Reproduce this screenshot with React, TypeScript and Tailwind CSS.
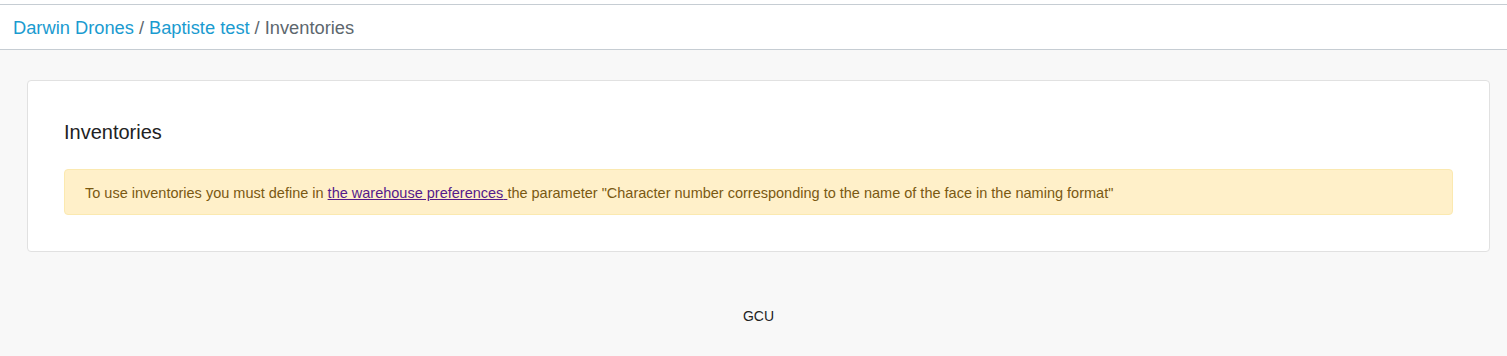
import React from "react";

function Breadcrumb() {
  return (
    <div className="mt-[4px] flex h-[46px] items-center border-y border-[#c6cdd3] bg-white px-[13px] pt-[1px] text-[18.3px]">
      <a href="#" className="text-[#1a9bd0]">
        Darwin Drones
      </a>
      <span className="px-[5px] text-[#5d676e]">/</span>
      <a href="#" className="text-[#1a9bd0]">
        Baptiste test
      </a>
      <span className="px-[5px] text-[#5d676e]">/</span>
      <span className="text-[#5d676e]">Inventories</span>
    </div>
  );
}

export default function App() {
  return (
    <div className="min-h-[356px] bg-[#f8f8f8] font-['Liberation_Sans',Arial,sans-serif]">
      <div className="bg-white">
        <Breadcrumb />
      </div>
      <div className="pl-[27px] pr-[17px] pt-[30px]">
        <div className="rounded-[4px] border border-[#e1e1e1] bg-white pl-[36px] pr-[36px] pb-[36px] pt-[39px]">
          <h1 className="text-[20px] leading-[24px] text-[#222]">Inventories</h1>
          <div className="mt-[25px] flex h-[46px] items-center rounded-[4px] border border-[#fbe9b0] bg-[#fff0c9] px-[20px] pt-[3px] text-[14.5px] text-[#7a5912]">
            <p>
              To use inventories you must define in{" "}
              <a href="#" className="text-[#551a8b] underline">
                the warehouse preferences{" "}
              </a>
              the parameter "Character number corresponding to the name of the face in the naming format"
            </p>
          </div>
        </div>
        <footer className="pt-[54px] text-center text-[14px] text-[#222]">GCU</footer>
      </div>
    </div>
  );
}
